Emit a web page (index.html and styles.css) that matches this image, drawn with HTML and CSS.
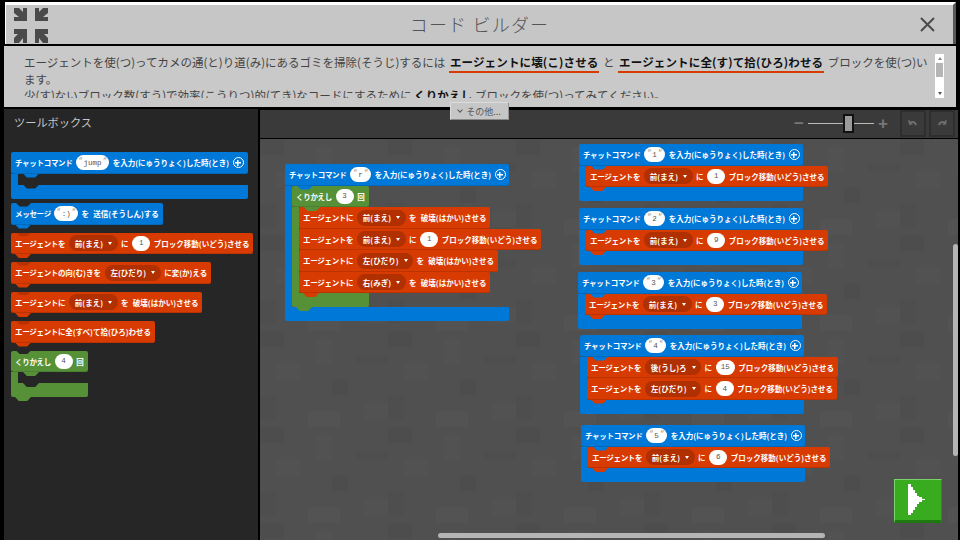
FILE: index.html
```html
<!DOCTYPE html>
<html lang="ja">
<head>
<meta charset="UTF-8">
<title>コード ビルダー</title>
<link rel="stylesheet" href="styles.css">
</head>
<body>
<div class="app">

    <!-- Title bar -->
    <header class="titlebar">
        <svg class="shrink-icon" viewBox="0 0 34 35" width="34" height="35">
            <path d="M0 0h5l4 4V0h4v13H0V9h5L0 5zM34 0h-5l-4 4V0h-4v13h13V9h-5l5-4zM0 35v-5l4-4H0v-5h13v14H9v-5l-4 5zM34 35v-5l-4-4h4v-5H21v14h4v-5l4 5z"/>
        </svg>
        <h1 class="title">コード ビルダー</h1>
        <svg class="close-icon" viewBox="0 0 15 15" width="15" height="15">
            <path d="M1 1l13 13M14 1L1 14"/>
        </svg>
    </header>

    <!-- Lesson text -->
    <section class="lesson">
        <p class="lesson-text">エージェントを使(つ)ってカメの通(と)り道(み)にあるゴミを掃除(そうじ)するには <b class="key">エージェントに壊(こ)させる</b> と <b class="key">エージェントに全(す)て拾(ひろ)わせる</b> ブロックを使(つ)い<br>ます。<br>少(す)ないブロック数(すう)で効率(こうりつ)的(てき)なコードにするために <b>くりかえし</b> ブロックを使(つ)ってみてください。</p>
        <div class="lesson-scroll">
            <span class="arrow-up"></span>
            <span class="lesson-thumb"></span>
            <span class="arrow-down"></span>
        </div>
        <button class="more-button"><span class="chevron"></span>その他...</button>
    </section>

    <div class="main">
        <!-- Toolbox -->
        <aside class="toolbox">
            <h2 class="toolbox-title">ツールボックス</h2>
            <div class="toolbox-blocks">
                <div class="cblock event">
                    <div class="block"><span class="lead">チャットコマンド</span> <span class="field quoted wide">jump</span> を入力(にゅうりょく)した時(とき) <span class="plus"></span></div>
                    <div class="mouth"></div>
                    <div class="foot"></div>
                </div>
                <div class="block call"><span class="lead">メッセージ</span> <span class="field quoted">:)</span> <span>を 送信(そうしん)する</span></div>
                <div class="block agent"><span class="lead">エージェントを</span> <span class="drop">前(まえ)</span> に <span class="field">1</span> ブロック移動(いどう)させる</div>
                <div class="block agent"><span><span class="lead">エージェントの</span>向(む)きを</span> <span class="drop">左(ひだり)</span> に変(か)える</div>
                <div class="block agent"><span class="lead">エージェントに</span> <span class="drop">前(まえ)</span> <span>を 破壊(はかい)させる</span></div>
                <div class="block agent"><span><span class="lead">エージェントに</span>全(すべ)て拾(ひろ)わせる</span></div>
                <div class="cblock loop">
                    <div class="block"><span class="lead">くりかえし</span> <span class="field">4</span> 回</div>
                    <div class="mouth"></div>
                    <div class="foot"></div>
                </div>
            </div>
        </aside>

        <div class="editor">
            <!-- Zoom and undo -->
            <div class="toolbar">
                <span class="zoom-sign">−</span>
                <div class="zoom-slider"><span class="zoom-thumb"></span></div>
                <span class="zoom-sign">+</span>
                <button class="tool-button"><svg viewBox="0 0 12 10" width="10" height="8"><path d="M0 0l1 6h5L4 4c2-1 4 0 5 3l2-1C10 2 6 0 3 2L1 0z"/></svg></button>
                <button class="tool-button"><svg viewBox="0 0 12 10" width="10" height="8"><path d="M12 0l-1 6H6l2-2C6 3 4 4 3 7L1 6c1-4 5-6 8-4l2-2z"/></svg></button>
            </div>

            <!-- Workspace: the stacks sit on a free canvas -->
            <div class="workspace">
                <svg class="stone" width="100%" height="100%">
                    <defs>
                        <pattern id="stone" width="128" height="96" patternUnits="userSpaceOnUse">
                            <rect x="0" y="0" width="24" height="16" fill="#4d4d4d"/>
                            <rect x="56" y="8" width="16" height="24" fill="#525252"/>
                            <rect x="96" y="24" width="32" height="8" fill="#4e4e4e"/>
                            <rect x="16" y="32" width="24" height="16" fill="#525252"/>
                            <rect x="72" y="48" width="16" height="16" fill="#4d4d4d"/>
                            <rect x="0" y="64" width="16" height="24" fill="#4e4e4e"/>
                            <rect x="48" y="80" width="32" height="16" fill="#535353"/>
                            <rect x="104" y="72" width="24" height="16" fill="#525252"/>
                        </pattern>
                    </defs>
                    <rect width="100%" height="100%" fill="url(#stone)"/>
                </svg>

                <div class="stack stack-r cblock event">
                    <div class="block"><span class="lead">チャットコマンド</span> <span class="field quoted">r</span> を入力(にゅうりょく)した時(とき) <span class="plus"></span></div>
                    <div class="mouth">
                        <div class="cblock loop">
                            <div class="block"><span class="lead">くりかえし</span> <span class="field">3</span> 回</div>
                            <div class="mouth">
                                <div class="block agent"><span class="lead">エージェントに</span> <span class="drop">前(まえ)</span> <span>を 破壊(はかい)させる</span></div>
                                <div class="block agent"><span class="lead">エージェントを</span> <span class="drop">前(まえ)</span> に <span class="field">1</span> ブロック移動(いどう)させる</div>
                                <div class="block agent"><span class="lead">エージェントに</span> <span class="drop">左(ひだり)</span> <span>を 破壊(はかい)させる</span></div>
                                <div class="block agent"><span class="lead">エージェントに</span> <span class="drop">右(みぎ)</span> <span>を 破壊(はかい)させる</span></div>
                            </div>
                            <div class="foot"></div>
                        </div>
                    </div>
                    <div class="foot"></div>
                </div>

                <div class="stack stack-1 cblock event">
                    <div class="block"><span class="lead">チャットコマンド</span> <span class="field quoted">1</span> を入力(にゅうりょく)した時(とき) <span class="plus"></span></div>
                    <div class="mouth">
                        <div class="block agent"><span class="lead">エージェントを</span> <span class="drop">前(まえ)</span> に <span class="field">1</span> ブロック移動(いどう)させる</div>
                    </div>
                    <div class="foot"></div>
                </div>

                <div class="stack stack-2 cblock event">
                    <div class="block"><span class="lead">チャットコマンド</span> <span class="field quoted">2</span> を入力(にゅうりょく)した時(とき) <span class="plus"></span></div>
                    <div class="mouth">
                        <div class="block agent"><span class="lead">エージェントを</span> <span class="drop">前(まえ)</span> に <span class="field">9</span> ブロック移動(いどう)させる</div>
                    </div>
                    <div class="foot"></div>
                </div>

                <div class="stack stack-3 cblock event">
                    <div class="block"><span class="lead">チャットコマンド</span> <span class="field quoted">3</span> を入力(にゅうりょく)した時(とき) <span class="plus"></span></div>
                    <div class="mouth">
                        <div class="block agent"><span class="lead">エージェントを</span> <span class="drop">前(まえ)</span> に <span class="field">3</span> ブロック移動(いどう)させる</div>
                    </div>
                    <div class="foot"></div>
                </div>

                <div class="stack stack-4 cblock event">
                    <div class="block"><span class="lead">チャットコマンド</span> <span class="field quoted">4</span> を入力(にゅうりょく)した時(とき) <span class="plus"></span></div>
                    <div class="mouth">
                        <div class="block agent"><span class="lead">エージェントを</span> <span class="drop">後(うし)ろ</span> に <span class="field">15</span> ブロック移動(いどう)させる</div>
                        <div class="block agent"><span class="lead">エージェントを</span> <span class="drop">左(ひだり)</span> に <span class="field">4</span> ブロック移動(いどう)させる</div>
                    </div>
                    <div class="foot"></div>
                </div>

                <div class="stack stack-5 cblock event">
                    <div class="block"><span class="lead">チャットコマンド</span> <span class="field quoted">5</span> を入力(にゅうりょく)した時(とき) <span class="plus"></span></div>
                    <div class="mouth">
                        <div class="block agent"><span class="lead">エージェントを</span> <span class="drop">前(まえ)</span> に <span class="field">6</span> ブロック移動(いどう)させる</div>
                    </div>
                    <div class="foot"></div>
                </div>

                <span class="scroll-v"></span>
                <span class="scroll-h"></span>

                <button class="run-button">
                    <svg viewBox="0 0 17 31" width="17" height="31"><path fill="#fff" d="M0 0h3v3h2v3h2v3h2v3h2v1h3v2h3v1h-3v2h-3v2H9v3H7v3H5v3H3v2H0z"/></svg>
                </button>
            </div>
        </div>
    </div>
</div>
</body>
</html>
```

FILE: styles.css
```css
* {
    box-sizing: border-box;
}

body {
    margin: 0;
    background-color: #000;
    font-family: 'Noto Sans CJK JP', 'Noto Sans', sans-serif;
    overflow: hidden;
}

.app {
    width: 960px;
    height: 540px;
    display: flex;
    flex-direction: column;
    padding-top: 2px;
    overflow: hidden;
}

/* Title bar */
.titlebar {
    height: 42px;
    margin: 0 4px 0 5px;
    padding: 0 18px 0 8px;
    flex: none;
    display: grid;
    grid-template-columns: 1fr auto 1fr;
    align-items: center;
    background-color: #c6c6c6;
    border-top: 3px solid #fff;
    border-left: 1px solid #fff;
    border-right: 3px solid #585858;
}

.shrink-icon {
    fill: #4a4a4a;
    margin-top: 1px;
}

.title {
    margin: 0 0 2px 10px;
    font-size: 18px;
    font-weight: 300;
    letter-spacing: 1.2px;
    color: #555;
}

.close-icon {
    fill: none;
    stroke: #4a4a4a;
    stroke-width: 2;
    justify-self: end;
}

/* Lesson text */
.lesson {
    height: 61px;
    margin: 2px 4px 2px;
    padding: 8px 0 0 20px;
    flex: none;
    position: relative;
    background-color: #c9c9c9;
    z-index: 5;
}

.lesson-text {
    margin: 0;
    height: 44px;
    overflow: hidden;
    white-space: nowrap;
    font-size: 11.5px;
    line-height: 16.5px;
    color: #444;
}

.lesson-text b {
    color: #111;
    font-weight: 700;
    letter-spacing: 0.15px;
}

.key {
    margin: 0 1px;
    padding: 0 1px 1px;
    border-bottom: 2px solid #d83b01;
}

.lesson-scroll {
    position: absolute;
    top: 8px;
    left: 931px;
    width: 9px;
    height: 44px;
    background-color: #fff;
    display: flex;
    flex-direction: column;
    align-items: center;
}

.lesson-thumb {
    width: 7px;
    height: 14px;
    margin-top: 3px;
    background-color: #b5b5b5;
}

.arrow-up,
.arrow-down {
    width: 0;
    height: 0;
    margin-top: 3px;
    border-left: 2px solid transparent;
    border-right: 2px solid transparent;
}

.arrow-up {
    border-bottom: 3px solid #888;
}

.arrow-down {
    margin-top: auto;
    margin-bottom: 3px;
    border-top: 3px solid #555;
}

.more-button {
    position: absolute;
    top: 56px;
    left: 446px;
    width: 59px;
    height: 18px;
    padding: 0;
    display: flex;
    align-items: center;
    justify-content: center;
    gap: 4px;
    font-family: inherit;
    font-size: 9px;
    color: #555;
    background-color: #c6c6c6;
    border: 1px solid #dcdcdc;
    border-right-color: #999;
    border-bottom-color: #888;
}

.chevron {
    width: 4px;
    height: 4px;
    margin-top: -3px;
    border-right: 1px solid #555;
    border-bottom: 1px solid #555;
    transform: rotate(45deg);
}

/* Main area */
.main {
    flex: 1;
    min-height: 0;
    display: flex;
    margin: 0 2px 0 4px;
}

.toolbox {
    width: 254px;
    flex: none;
    padding: 4px 0 0 7px;
    background-color: #262626;
    --notch: #262626;
}

.toolbox-title {
    margin: 0 0 21px 3px;
    font-size: 11.2px;
    font-weight: 400;
    line-height: 18px;
    color: #c6c6c6;
}

.toolbox-blocks {
    display: flex;
    flex-direction: column;
    align-items: flex-start;
    gap: 8px;
}

.toolbox-blocks .event {
    margin-bottom: -3.5px;
}

.editor {
    flex: 1;
    min-width: 0;
    display: flex;
    flex-direction: column;
    margin-left: 2px;
}

.toolbar {
    height: 27.5px;
    flex: none;
    margin-top: 1px;
    display: flex;
    align-items: center;
    justify-content: flex-end;
    padding-right: 3px;
    background-color: #3a3a3a;
}

.zoom-sign {
    width: 12px;
    font-family: 'Liberation Sans', sans-serif;
    font-size: 17px;
    font-weight: 700;
    line-height: 17px;
    text-align: center;
    color: #777;
}

.zoom-slider {
    width: 66px;
    height: 1px;
    margin: 0 3px;
    position: relative;
    background-color: #bbb;
}

.zoom-thumb {
    position: absolute;
    top: -9px;
    left: 35px;
    width: 11px;
    height: 19px;
    background-color: #9a9a9a;
    border: 2px solid #111;
}

.tool-button {
    width: 26px;
    height: 27px;
    margin-left: 3px;
    padding: 0;
    background-color: #3a3a3a;
    border: 2px solid #2e2e2e;
    fill: #6f6f6f;
}

.tool-button:first-of-type {
    margin-left: 11px;
}

.workspace {
    flex: 1;
    margin-top: 1.5px;
    position: relative;
    overflow: hidden;
    background-color: #505050;
}

.stone {
    position: absolute;
    inset: 0;
}

/* Blocks */
.block {
    height: 21.5px;
    width: max-content;
    padding: 0 4px;
    position: relative;
    display: flex;
    align-items: center;
    gap: 3.6px;
    white-space: nowrap;
    word-spacing: 2.5px;
    font-size: 7.5px;
    font-weight: 700;
    color: #fff;
    background-color: var(--fill);
    border-radius: 2px;
    box-shadow: inset 0 -1px rgba(0, 0, 0, 0.12);
}

.lead {
    letter-spacing: -0.3px;
}

.block::before {
    content: "";
    position: absolute;
    top: 0;
    left: 5px;
    width: 15px;
    height: 3.5px;
    background-color: var(--notch);
    clip-path: polygon(0 0, 100% 0, 76% 100%, 24% 100%);
}

.block::after {
    content: "";
    position: absolute;
    top: 100%;
    left: 4px;
    width: 16px;
    height: 4px;
    z-index: 2;
    background-color: var(--fill);
    clip-path: polygon(0 0, 100% 0, 76% 100%, 24% 100%);
}

.block + .block::before {
    background-color: rgba(0, 0, 0, 0.15);
}

.event {
    --fill: #0078d7;
}

.call {
    --fill: #0078d7;
}

.agent {
    --fill: #d83b01;
}

.loop {
    --fill: #569138;
}

.event > .block::before {
    display: none;
}

.cblock {
    position: relative;
    width: max-content;
}

.mouth {
    width: 0;
    min-width: 100%;
    min-height: 11px;
    border-left: 7px solid var(--fill);
    --notch: var(--fill);
}

.foot {
    height: 14px;
    position: relative;
    background-color: var(--fill);
    border-radius: 0 0 2px 2px;
}

/* an empty mouth shows the notch its bar leaves for the next block */
.mouth:empty + .foot::before {
    content: "";
    position: absolute;
    top: 0;
    left: 12px;
    width: 16px;
    height: 4px;
    background-color: #262626;
    clip-path: polygon(0 0, 100% 0, 76% 100%, 24% 100%);
}

.loop > .foot::after {
    content: "";
    position: absolute;
    top: 100%;
    left: 4px;
    width: 16px;
    height: 4px;
    z-index: 2;
    background-color: var(--fill);
    clip-path: polygon(0 0, 100% 0, 76% 100%, 24% 100%);
}

.cblock > .block {
    width: 100%;
}

.cblock > .block::after {
    left: 12px;
}

.field {
    height: 15px;
    min-width: 18px;
    padding: 0 5px;
    display: inline-flex;
    align-items: center;
    justify-content: center;
    flex: none;
    font-family: 'Liberation Mono', monospace;
    font-weight: 400;
    color: #555;
    background-color: #fff;
    border-radius: 8px;
}

.quoted {
    min-width: 21px;
    padding: 0 2px;
    gap: 1px;
}

.wide {
    width: 33px;
}

.quoted::before,
.quoted::after {
    content: "\201C";
    font-size: 7px;
    line-height: 7px;
    margin-top: -5px;
    color: #a08a70;
}

.drop {
    height: 16px;
    padding: 0 5.5px 0 6px;
    display: inline-flex;
    align-items: center;
    gap: 5px;
    flex: none;
    background-color: #b13001;
    border-radius: 8px;
}

.drop::after {
    content: "";
    border-left: 2.5px solid transparent;
    border-right: 2.5px solid transparent;
    border-top: 3px solid #fff;
}

.plus {
    width: 11px;
    height: 11px;
    flex: none;
    border-radius: 50%;
    border: 1.5px solid #fff;
    background:
        linear-gradient(#fff, #fff) center / 6px 1.5px no-repeat,
        linear-gradient(#fff, #fff) center / 1.5px 6px no-repeat;
}

/* Where each stack was dropped on the workspace */
.stack {
    position: absolute;
    width: 224px;
}

.stack-r { left: 25px; top: 25px; }
.stack-1 { left: 319px; top: 5px; }
.stack-2 { left: 319px; top: 69px; }
.stack-3 { left: 318px; top: 133px; }
.stack-4 { left: 320px; top: 196px; }
.stack-5 { left: 321px; top: 286px; }

.scroll-v {
    position: absolute;
    top: 105px;
    right: 0;
    width: 5px;
    height: 212px;
    background-color: #b5b5b5;
    border-radius: 3px;
}

.scroll-h {
    position: absolute;
    left: 178px;
    bottom: 2px;
    width: 387px;
    height: 5px;
    background-color: #b5b5b5;
    border-radius: 3px;
}

.run-button {
    position: absolute;
    top: 340px;
    left: 634px;
    width: 48px;
    height: 44px;
    padding: 0 3px 2px 0;
    display: flex;
    align-items: center;
    justify-content: center;
    background-color: #38ab1e;
    border: 1px solid #7bd26a;
    border-right-color: #2d8c18;
    border-bottom: 3px solid #1e7a10;
}
```
